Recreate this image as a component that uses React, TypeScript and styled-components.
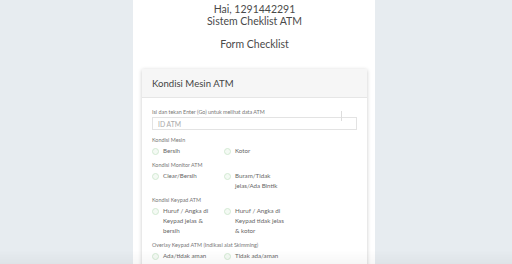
import styled, { createGlobalStyle } from "styled-components";

type Group = {
  label: string;
  options: string[];
};

const groups: Group[] = [
  { label: "Kondisi Mesin", options: ["Bersih", "Kotor"] },
  { label: "Kondisi Monitor ATM", options: ["Clear/Bersih", "Buram/Tidak jelas/Ada Bintik"] },
  {
    label: "Kondisi Keypad ATM",
    options: ["Huruf / Angka di Keypad jelas & bersih", "Huruf / Angka di Keypad tidak jelas & kotor"],
  },
  { label: "Overlay Keypad ATM (Indikasi alat Skimming)", options: ["Ada/tidak aman", "Tidak ada/aman"] },
];

export default function App() {
  return (
    <>
      <GlobalStyle />
      <Page>
        <Greeting>
          <div>Hai, 1291442291</div>
          <div>Sistem Cheklist ATM</div>
        </Greeting>
        <FormTitle>Form Checklist</FormTitle>
        <Card>
          <CardHeader>Kondisi Mesin ATM</CardHeader>
          <CardBody>
            <FieldLabel>Isi dan tekan Enter (Go) untuk melihat data ATM</FieldLabel>
            <InputWrap>
              <Input placeholder="ID ATM" />
            </InputWrap>
            {groups.map((group) => (
              <Fieldset key={group.label}>
                <GroupLabel>{group.label}</GroupLabel>
                <Options>
                  {group.options.map((option) => (
                    <Option key={option}>
                      <Radio />
                      <OptionText>{option}</OptionText>
                    </Option>
                  ))}
                </Options>
              </Fieldset>
            ))}
          </CardBody>
        </Card>
      </Page>
      <BottomShade />
    </>
  );
}

const GlobalStyle = createGlobalStyle`
  html, body {
    margin: 0;
    padding: 0;
    background: #e7ecf0;
    font-family: Lato, "Open Sans", sans-serif;
    overflow: hidden;
  }
`;

const Page = styled.main`
  width: 242px;
  min-height: 264px;
  margin-left: 133px;
  padding: 3px 8px 0 9px;
  box-sizing: border-box;
  background: #fff;
`;

const Greeting = styled.div`
  text-align: center;
  color: #4a4a4a;
  font-size: 10.5px;
  line-height: 12px;
`;

const FormTitle = styled.div`
  text-align: center;
  color: #4a4a4a;
  font-size: 10.5px;
  line-height: 12px;
  margin-top: 11px;
  margin-bottom: 19px;
`;

const Card = styled.section`
  background: #fff;
  box-shadow: 0 1px 4px rgba(0, 0, 0, 0.22);
`;

const CardHeader = styled.h2`
  margin: 0;
  height: 28px;
  padding-left: 10px;
  display: flex;
  align-items: center;
  background: #f6f6f6;
  border-bottom: 1px solid #e6e6e6;
  color: #444;
  font-size: 9.6px;
  font-weight: 400;
`;

const CardBody = styled.div`
  padding: 11px 10px 12px 10px;
`;

const FieldLabel = styled.div`
  font-size: 5.4px;
  line-height: 7px;
  color: #777;
`;

const InputWrap = styled.div`
  position: relative;
  margin-top: 1px;

  &::after {
    content: "";
    position: absolute;
    right: 15px;
    top: -6px;
    width: 1px;
    height: 10px;
    background: #ddd;
  }
`;

const Input = styled.input`
  display: block;
  width: 100%;
  height: 13px;
  box-sizing: border-box;
  border: 1px solid #e3e3e3;
  padding: 0 5px;
  font-family: inherit;
  font-size: 6.8px;
  color: #555;
  outline: none;

  &::placeholder {
    color: #aaa;
  }
`;

const Fieldset = styled.div`
  margin-top: 7px;

  & + & {
    margin-top: 6px;
  }
`;

const GroupLabel = styled.div`
  font-size: 5.4px;
  line-height: 7px;
  color: #777;
  margin-bottom: 2px;
`;

const Options = styled.div`
  display: grid;
  grid-template-columns: 72px 1fr;
`;

const Option = styled.label`
  display: flex;
  align-items: flex-start;
`;

const Radio = styled.span`
  flex: none;
  width: 5px;
  height: 5px;
  margin: 2px 4px 0 0;
  border: 1px solid #d3ead3;
  border-radius: 50%;
  background: #f4faf4;
`;

const OptionText = styled.span`
  width: 49px;
  font-size: 6.2px;
  line-height: 10px;
  color: #666;
`;

const BottomShade = styled.div`
  position: fixed;
  left: 0;
  right: 0;
  bottom: 0;
  height: 14px;
  background: linear-gradient(rgba(0, 0, 0, 0), rgba(0, 0, 0, 0.035));
  pointer-events: none;
`;
